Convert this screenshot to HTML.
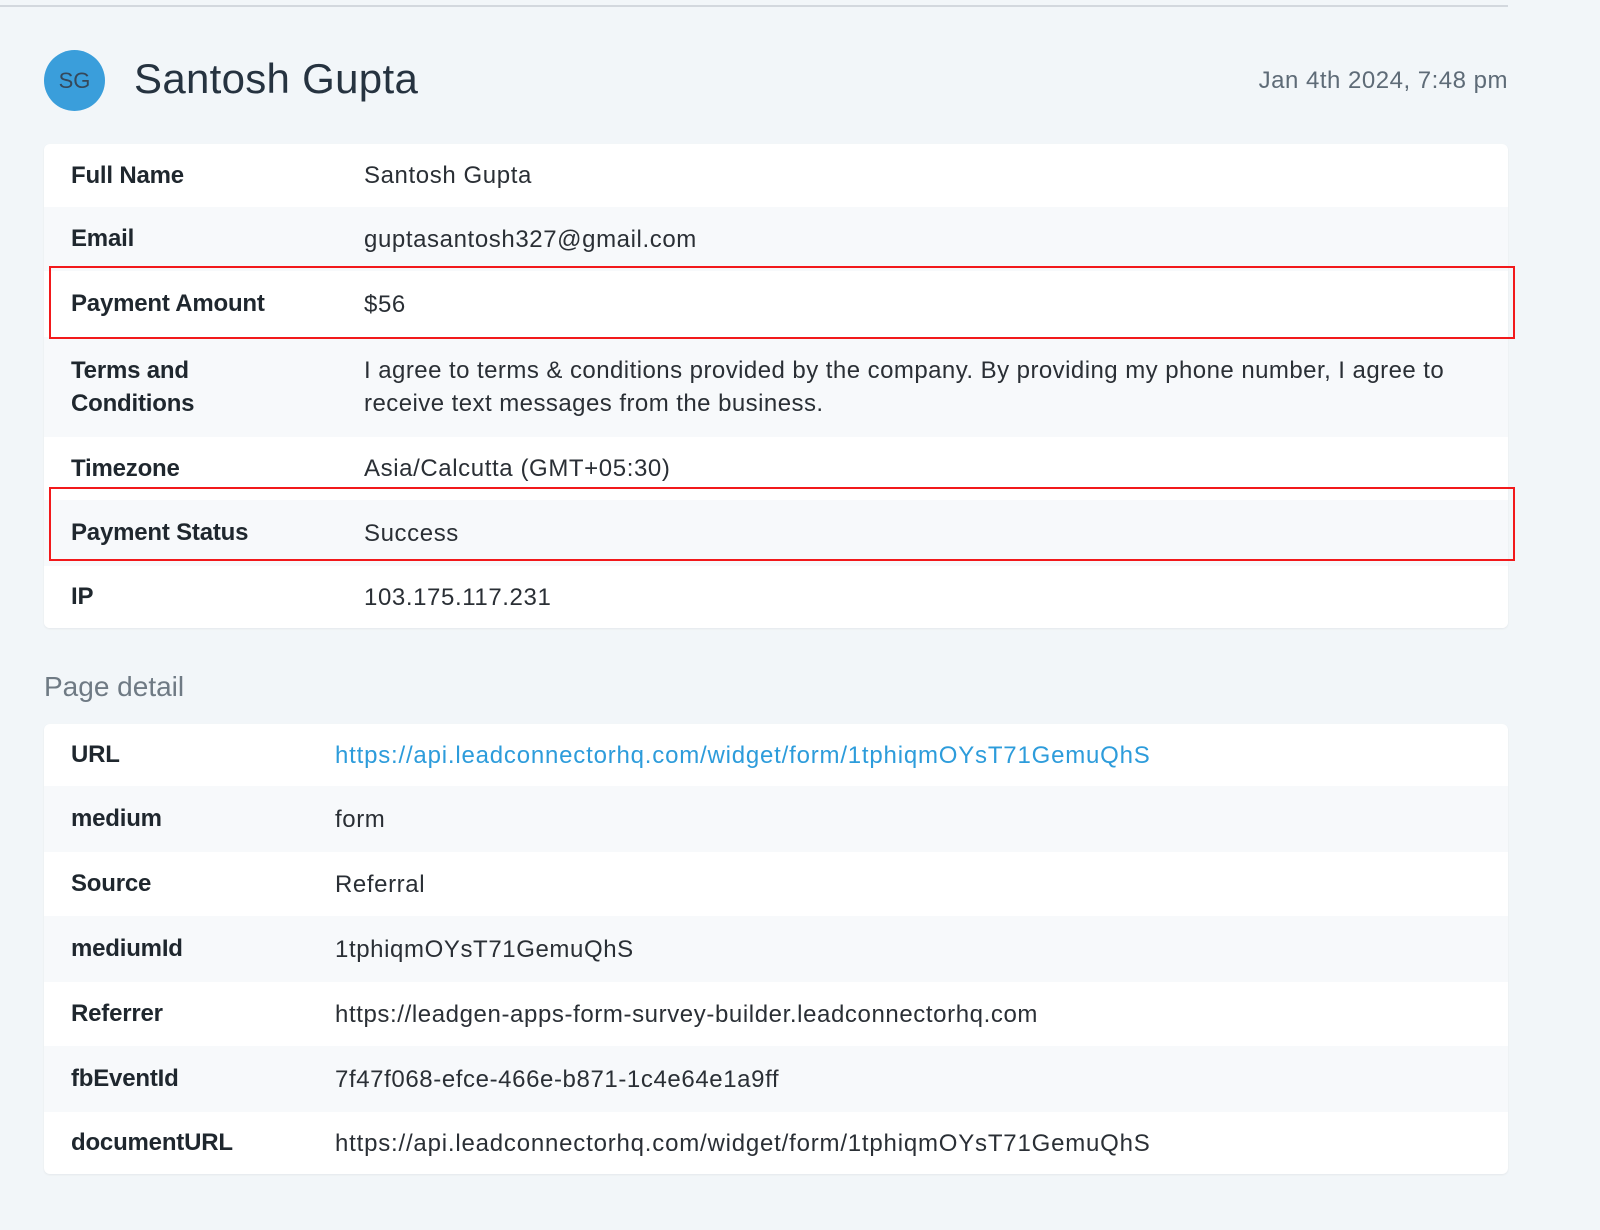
<!DOCTYPE html>
<html><head><meta charset="utf-8"><style>
*{margin:0;padding:0;box-sizing:border-box}
body{width:1600px;height:1230px;background:#f2f6f9;font-family:"Liberation Sans",Arial,sans-serif;color:#222;position:relative;overflow:hidden}
.topline{position:absolute;left:0;top:5px;width:1508px;height:2px;background:#d3d8de}
.avatar{position:absolute;left:44px;top:50px;width:61px;height:61px;border-radius:50%;background:#3a9edb;color:#35485a;font-size:22px;display:flex;align-items:center;justify-content:center}
.name{position:absolute;left:134px;top:55px;font-size:42px;letter-spacing:0.3px;color:#263340}
.date{position:absolute;right:92px;top:67px;font-size:24px;letter-spacing:0.5px;color:#5e6b77}
.card{position:absolute;left:44px;width:1464px;background:#fff;border-radius:6px;box-shadow:0 1px 2px rgba(0,0,0,.06);overflow:hidden}
.row{display:flex;align-items:center;font-size:24px;letter-spacing:0.6px}
.row:nth-child(even){background:#f7f9fb}
.lab{width:320px;padding-left:27px;font-weight:bold;color:#1f272e;flex:none;letter-spacing:-0.2px}
.c2 .lab{width:291px}
.val{color:#2a2f35;line-height:33px}
.link{color:#2d9cdb;letter-spacing:0.8px}
.red{position:absolute;left:49px;width:1466px;border:2.5px solid #f2191b}
.pd{position:absolute;left:44px;top:671px;font-size:28px;color:#6f7a84}
</style></head><body>
<div class="topline"></div>
<div class="avatar">SG</div>
<div class="name">Santosh Gupta</div>
<div class="date">Jan 4th 2024, 7:48 pm</div>
<div class="card" style="top:144px">
 <div class="row" style="height:63px"><div class="lab">Full Name</div><div class="val">Santosh Gupta</div></div>
 <div class="row" style="height:64px"><div class="lab">Email</div><div class="val">guptasantosh327@gmail.com</div></div>
 <div class="row" style="height:66px;background:#fff"><div class="lab">Payment Amount</div><div class="val">$56</div></div>
 <div class="row" style="height:100px;background:#f7f9fb"><div class="lab" style="line-height:33px">Terms and<br>Conditions</div><div class="val" style="white-space:nowrap;letter-spacing:0.45px">I agree to terms &amp; conditions provided by the company. By providing my phone number, I agree to<br>receive text messages from the business.</div></div>
 <div class="row" style="height:63px;background:#fff"><div class="lab">Timezone</div><div class="val">Asia/Calcutta (GMT+05:30)</div></div>
 <div class="row" style="height:66px;background:#f7f9fb"><div class="lab">Payment Status</div><div class="val">Success</div></div>
 <div class="row" style="height:62px;background:#fff"><div class="lab">IP</div><div class="val">103.175.117.231</div></div>
</div>
<div class="red" style="top:266px;height:73px"></div>
<div class="red" style="top:487px;height:74px"></div>
<div class="pd">Page detail</div>
<div class="card c2" style="top:724px">
 <div class="row" style="height:62px"><div class="lab">URL</div><div class="val link">https://api.leadconnectorhq.com/widget/form/1tphiqmOYsT71GemuQhS</div></div>
 <div class="row" style="height:66px"><div class="lab">medium</div><div class="val">form</div></div>
 <div class="row" style="height:64px"><div class="lab">Source</div><div class="val">Referral</div></div>
 <div class="row" style="height:66px"><div class="lab">mediumId</div><div class="val">1tphiqmOYsT71GemuQhS</div></div>
 <div class="row" style="height:64px"><div class="lab">Referrer</div><div class="val">https://leadgen-apps-form-survey-builder.leadconnectorhq.com</div></div>
 <div class="row" style="height:66px"><div class="lab">fbEventId</div><div class="val">7f47f068-efce-466e-b871-1c4e64e1a9ff</div></div>
 <div class="row" style="height:62px"><div class="lab">documentURL</div><div class="val" style="letter-spacing:0.8px">https://api.leadconnectorhq.com/widget/form/1tphiqmOYsT71GemuQhS</div></div>
</div>
</body></html>
